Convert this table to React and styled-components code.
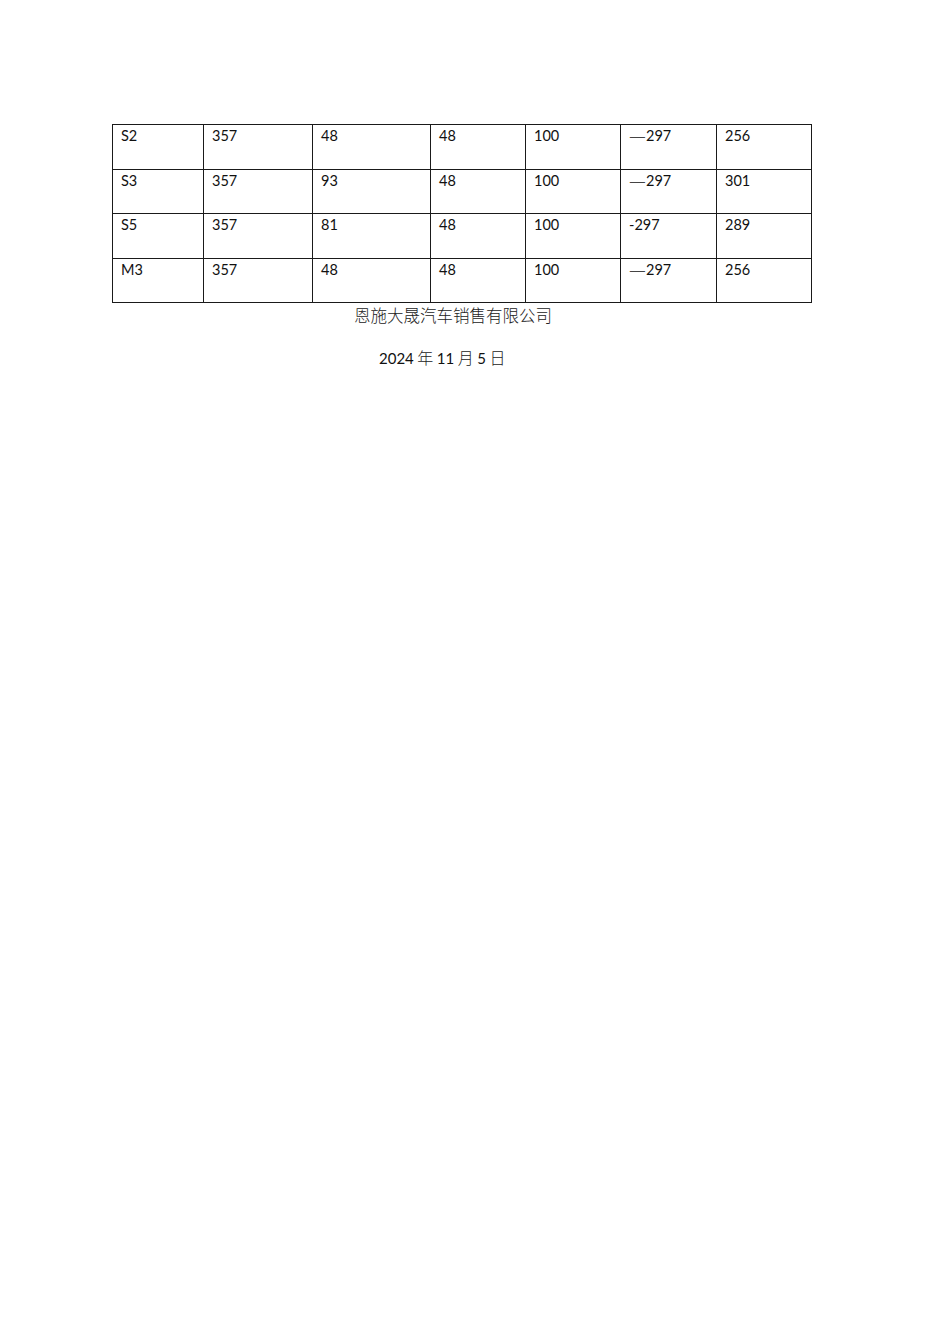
import React from "react";
import styled, { createGlobalStyle } from "styled-components";

const Global = createGlobalStyle`
  html, body { margin: 0; padding: 0; background: #fff; }
  body { font-family: Lato, "Noto Sans CJK SC", sans-serif; color: #000; }
`;

const Page = styled.div`
  width: 950px;
  min-height: 1344px;
  box-sizing: border-box;
  padding: 124px 0 0 112px;
  background: #fff;
`;

const Table = styled.table`
  border-collapse: collapse;
  table-layout: fixed;
  width: 699px;
`;

const Row = styled.tr`
  height: 44.5px;
`;

const Cell = styled.td`
  border: 1px solid #1a1a1a;
  vertical-align: top;
  padding: 2px 8px 0 8px;
  font-family: Lato, "Noto Sans CJK SC", sans-serif;
  font-size: 14.5px;
  line-height: 17px;
  color: #111;
  white-space: nowrap;
`;

const Dash = styled.span`
  display: inline-block;
  width: 17px;
  font-family: "DejaVu Sans", sans-serif;
  font-size: 14px;
  color: #444;
  transform: scaleX(1.2);
  transform-origin: left center;
`;

const Company = styled.div`
  margin-top: 2px;
  padding-left: 242px;
  font-family: "Noto Sans CJK SC", sans-serif;
  font-weight: 300;
  font-size: 16.5px;
  line-height: 20px;
  color: #222;
`;

const DateLine = styled.div`
  margin-top: 22px;
  padding-left: 267px;
  font-family: Lato, "Noto Sans CJK SC", sans-serif;
  font-size: 15px;
  line-height: 20px;
  color: #111;
`;

const Cjk = styled.span`
  font-family: "Noto Sans CJK SC", sans-serif;
  font-weight: 300;
  font-size: 16px;
  margin: 0 3.5px;
  color: #222;
`;

const widths = [91, 109, 118, 95, 95, 96, 95];

const rows = [
  ["S2", "357", "48", "48", "100", "em297", "256"],
  ["S3", "357", "93", "48", "100", "em297", "301"],
  ["S5", "357", "81", "48", "100", "-297", "289"],
  ["M3", "357", "48", "48", "100", "em297", "256"],
];

function renderValue(v) {
  if (v.startsWith("em")) {
    return (
      <>
        <Dash>—</Dash>
        {v.slice(2)}
      </>
    );
  }
  return v;
}

export default function App() {
  return (
    <>
      <Global />
      <Page>
        <Table>
          <colgroup>
            {widths.map((w, i) => (
              <col key={i} style={{ width: w }} />
            ))}
          </colgroup>
          <tbody>
            {rows.map((r, i) => (
              <Row key={i}>
                {r.map((c, j) => (
                  <Cell key={j}>{renderValue(c)}</Cell>
                ))}
              </Row>
            ))}
          </tbody>
        </Table>
        <Company>恩施大晟汽车销售有限公司</Company>
        <DateLine>
          2024<Cjk>年</Cjk>11<Cjk>月</Cjk>5<Cjk>日</Cjk>
        </DateLine>
      </Page>
    </>
  );
}
